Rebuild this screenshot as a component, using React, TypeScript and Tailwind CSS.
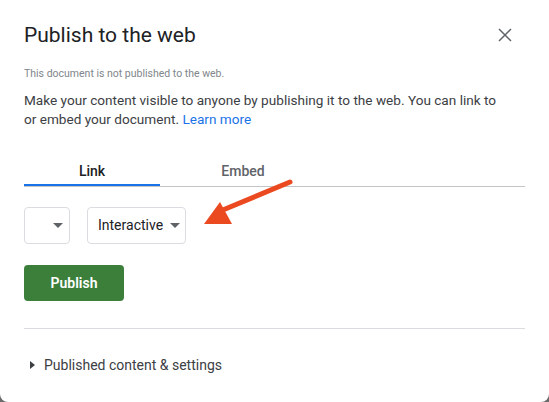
import React from "react";

function CaretDown() {
  return (
    <svg width="10" height="5" viewBox="0 0 10 5" className="shrink-0">
      <path d="M0 0 L10 0 L5 5 Z" fill="#5f6368" />
    </svg>
  );
}

function CloseIcon() {
  return (
    <svg width="14" height="14" viewBox="0 0 14 14">
      <path d="M1 1 L13 13 M13 1 L1 13" stroke="#5f6368" strokeWidth="1.5" />
    </svg>
  );
}

function RedArrow() {
  return (
    <svg
      className="absolute left-0 top-0 pointer-events-none"
      width="549"
      height="402"
      viewBox="0 0 549 402"
    >
      <line x1="290" y1="182" x2="218" y2="212" stroke="#eb4a21" strokeWidth="5" strokeLinecap="round" />
      <path d="M204 224 L220 202 L232 224 Z" fill="#eb4a21" />
    </svg>
  );
}

export default function App() {
  return (
    <div className="w-[549px] h-[402px] bg-[#6b6b6b]" style={{ fontFamily: "Roboto, Arial, sans-serif" }}>
      <div className="relative w-full h-full bg-white rounded-b-lg px-6 text-[#202124]">
        <div className="flex items-center justify-between pt-[21px]">
          <h1 className="text-[21px] leading-[28px] font-normal text-[#202124]">Publish to the web</h1>
          <button className="w-[24px] h-[24px] flex items-center justify-center mr-[8px]">
            <CloseIcon />
          </button>
        </div>

        <p className="mt-[18px] text-[10.5px] leading-[14px] text-[#80868b]">This document is not published to the web.</p>

        <p className="mt-[10px] max-w-[480px] text-[13.6px] leading-[19px] text-[#3c4043]">
          Make your content visible to anyone by publishing it to the web. You can link to or embed your document.{" "}
          <a className="text-[#1a73e8]">Learn more</a>
        </p>

        <div className="mt-[25px] flex border-b border-[#c4c4c4]">
          <div className="w-[136px] h-[32px] pt-[7px] text-center text-[14px] leading-[20px] font-medium text-[#202124] border-b-2 border-[#1a73e8] -mb-px">
            Link
          </div>
          <div className="w-[166px] h-[32px] pt-[7px] text-center text-[14px] leading-[20px] font-medium text-[#5f6368]">
            Embed
          </div>
        </div>

        <div className="mt-[20px] flex gap-[17px]">
          <div className="w-[46px] h-[37px] border border-[#dadce0] rounded-[4px] flex items-center justify-end pr-[6px]">
            <CaretDown />
          </div>
          <div className="w-[99px] h-[37px] border border-[#dadce0] rounded-[4px] flex items-center gap-[7px] pl-[10px]">
            <span className="text-[14px] text-[#202124]">Interactive</span>
            <CaretDown />
          </div>
        </div>

        <button className="mt-[21px] w-[100px] h-[36px] rounded-[4px] bg-[#3b7f3b] text-white text-[14px] font-semibold">
          Publish
        </button>

        <div className="mt-[27px] border-t border-[#dadce0]" />

        <div className="mt-[26px] flex items-center gap-[9px] pl-[6px] h-[20px]">
          <svg width="5" height="8" viewBox="0 0 5 8">
            <path d="M0 0 L5 4 L0 8 Z" fill="#3c4043" />
          </svg>
          <span className="text-[14px] text-[#3c4043]">Published content &amp; settings</span>
        </div>

        <RedArrow />
      </div>
    </div>
  );
}
